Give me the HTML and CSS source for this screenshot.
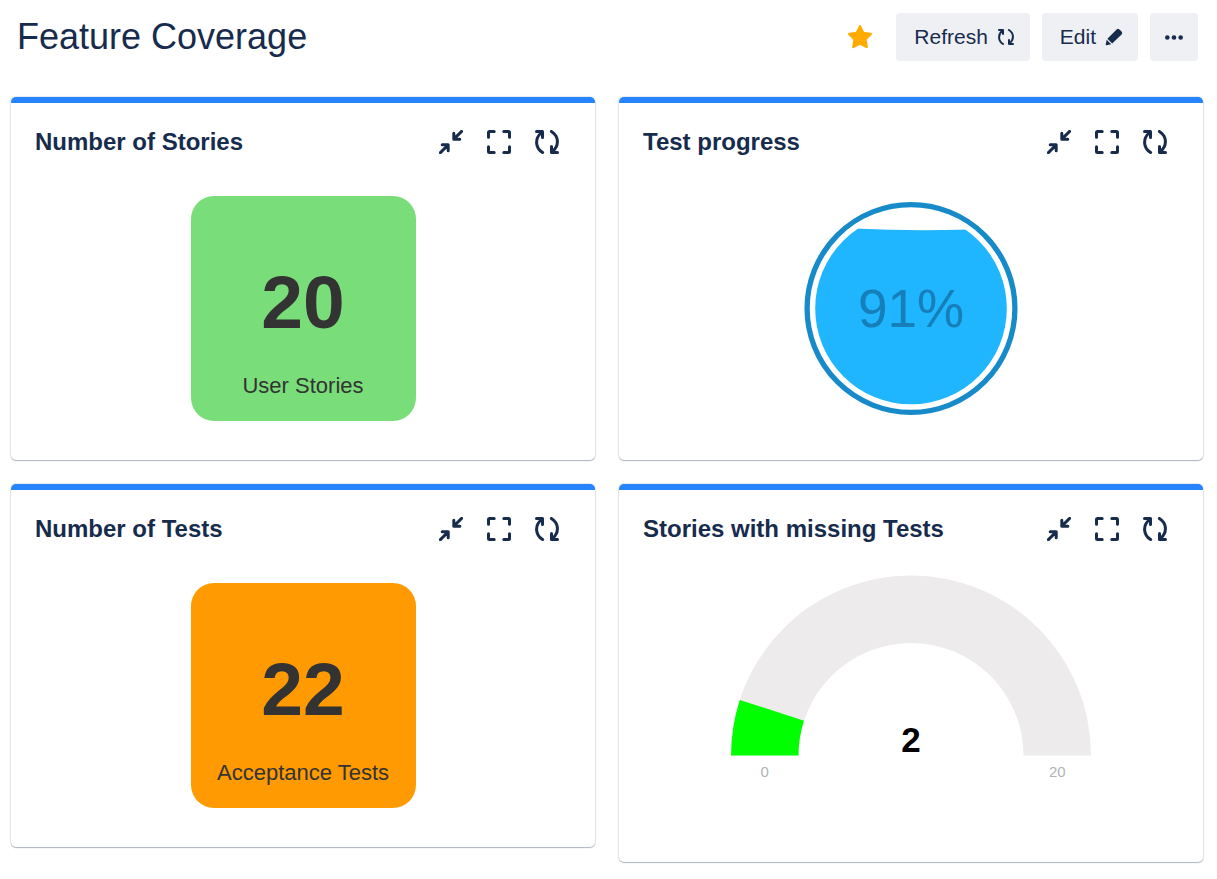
FILE: index.html
```html
<!DOCTYPE html>
<html lang="en">
<head>
<meta charset="utf-8">
<title>Feature Coverage</title>
<link rel="stylesheet" href="styles.css">
</head>
<body>
<svg class="sprite" aria-hidden="true">
  <symbol id="i-collapse" viewBox="0 0 24 24">
    <path d="M22.6 1.4 15.2 8.8M14.8 3.2v6h6M1.4 22.6l7.4-7.4M3.2 14.8h6v6" fill="none" stroke="currentColor" stroke-width="3" stroke-linecap="round" stroke-linejoin="round"/>
  </symbol>
  <symbol id="i-full" viewBox="0 0 24 24">
    <path d="M1.5 7.2V2.5a1 1 0 0 1 1-1h4.7M16.8 1.5h4.7a1 1 0 0 1 1 1v4.7M22.5 16.8v4.7a1 1 0 0 1-1 1h-4.7M7.2 22.5H2.5a1 1 0 0 1-1-1v-4.7" fill="none" stroke="currentColor" stroke-width="3" stroke-linecap="round"/>
  </symbol>
  <symbol id="i-refresh" viewBox="0 0 24 24">
    <path d="M1.5 1.5h6v6M6 3C-.2 8.500 0 17.800 7.600 22.500M22.500 22.500h-6v-6M18 21C24.200 15.500 24 6.200 16.400 1.500" fill="none" stroke="currentColor" stroke-width="3" stroke-linecap="round" stroke-linejoin="round"/>
    <path d="M3 2h5v5ZM21 22h-5v-5Z" fill="currentColor"/>
  </symbol>
</svg>

<header class="page-header">
  <h1 class="page-title">Feature Coverage</h1>
  <div class="actions">
    <button class="star" type="button" aria-label="Favourite">
      <svg width="26" height="26" viewBox="0 0 26 26"><path d="M13 2.200 16.200 8.900 23.800 10 18.400 15.400 19.700 22.900 13 19.500 6.300 22.900 7.600 15.400 2.200 10 9.800 8.900Z" fill="#ffab00" stroke="#ffab00" stroke-width="2.400" stroke-linejoin="round"/></svg>
    </button>
    <button class="btn" type="button">Refresh
      <span class="btn-icon"><svg width="16" height="16"><use href="#i-refresh"/></svg></span>
    </button>
    <button class="btn" type="button">Edit
      <span class="btn-icon"><svg width="18" height="18" viewBox="0 0 18 18"><path d="M11.600 1.400a2 2 0 0 1 2.800 0l2.200 2.200a2 2 0 0 1 0 2.800L7.200 15.600 2.400 10.800ZM1.700 11.800l4.500 4.500L1.400 17.300a.6.6 0 0 1-.7-.7Z" fill="currentColor"/></svg></span>
    </button>
    <button class="btn btn-more" type="button" aria-label="More actions">
      <svg width="18" height="6" viewBox="0 0 18 6"><g fill="currentColor"><circle cx="2.300" cy="3.500" r="2.300"/><circle cx="9" cy="3.500" r="2.300"/><circle cx="15.700" cy="3.500" r="2.300"/></g></svg>
    </button>
  </div>
</header>

<main class="board">
  <section class="card">
    <header class="card-header">
      <h2 class="card-title">Number of Stories</h2>
      <div class="tools">
        <button type="button" class="tool" aria-label="Minimize"><svg width="24" height="24"><use href="#i-collapse"/></svg></button>
        <button type="button" class="tool" aria-label="Maximize"><svg width="24" height="24"><use href="#i-full"/></svg></button>
        <button type="button" class="tool" aria-label="Refresh gadget"><svg width="24" height="24"><use href="#i-refresh"/></svg></button>
      </div>
    </header>
    <div class="card-body">
      <div class="tile tile-green">
        <strong class="tile-value">20</strong>
        <span class="tile-label">User Stories</span>
      </div>
    </div>
  </section>

  <section class="card">
    <header class="card-header">
      <h2 class="card-title">Test progress</h2>
      <div class="tools">
        <button type="button" class="tool" aria-label="Minimize"><svg width="24" height="24"><use href="#i-collapse"/></svg></button>
        <button type="button" class="tool" aria-label="Maximize"><svg width="24" height="24"><use href="#i-full"/></svg></button>
        <button type="button" class="tool" aria-label="Refresh gadget"><svg width="24" height="24"><use href="#i-refresh"/></svg></button>
      </div>
    </header>
    <div class="card-body">
      <svg class="chart" width="225" height="225" viewBox="0 0 225 225" role="img" aria-label="91%">
        <circle cx="112" cy="112.500" r="103.900" fill="none" stroke="#178bca" stroke-width="5.300"/>
        <clipPath id="fluid"><path d="M0 32.500H56Q112 35.500 170 33.500H225V225H0Z"/></clipPath>
        <circle cx="112" cy="112.500" r="95.800" fill="#1fb5ff" clip-path="url(#fluid)"/>
        <text class="liquid-text" x="112" y="131" text-anchor="middle">91%</text>
      </svg>
    </div>
  </section>

  <section class="card">
    <header class="card-header">
      <h2 class="card-title">Number of Tests</h2>
      <div class="tools">
        <button type="button" class="tool" aria-label="Minimize"><svg width="24" height="24"><use href="#i-collapse"/></svg></button>
        <button type="button" class="tool" aria-label="Maximize"><svg width="24" height="24"><use href="#i-full"/></svg></button>
        <button type="button" class="tool" aria-label="Refresh gadget"><svg width="24" height="24"><use href="#i-refresh"/></svg></button>
      </div>
    </header>
    <div class="card-body">
      <div class="tile tile-orange">
        <strong class="tile-value">22</strong>
        <span class="tile-label">Acceptance Tests</span>
      </div>
    </div>
  </section>

  <section class="card">
    <header class="card-header">
      <h2 class="card-title">Stories with missing Tests</h2>
      <div class="tools">
        <button type="button" class="tool" aria-label="Minimize"><svg width="24" height="24"><use href="#i-collapse"/></svg></button>
        <button type="button" class="tool" aria-label="Maximize"><svg width="24" height="24"><use href="#i-full"/></svg></button>
        <button type="button" class="tool" aria-label="Refresh gadget"><svg width="24" height="24"><use href="#i-refresh"/></svg></button>
      </div>
    </header>
    <div class="card-body card-body-gauge">
      <svg class="chart" width="360" height="225" viewBox="0 0 360 225" role="img" aria-label="2 of 20">
        <path d="M0 180.500A180 180 0 0 1 360 180.500H292.500A112.500 112.500 0 0 0 67.500 180.500Z" fill="#edebeb"/>
        <path d="M0 180.500A180 180 0 0 1 8.810 124.880L73 145.740A112.500 112.500 0 0 0 67.500 180.500Z" fill="#0f0"/>
        <text class="gauge-value" x="180" y="177" text-anchor="middle">2</text>
        <text class="gauge-label" x="33.750" y="202" text-anchor="middle">0</text>
        <text class="gauge-label" x="326.250" y="202" text-anchor="middle">20</text>
      </svg>
    </div>
  </section>
</main>
</body>
</html>
```
FILE: styles.css
```css
* {
  box-sizing: border-box;
}

body {
  margin: 0;
  padding: 13px 14px 16px 11px;
  background: #fff;
  color: #172b4d;
  font-family: "Liberation Sans", Arial, sans-serif;
}

svg {
  display: block;
}

.sprite {
  display: none;
}

h1,
h2 {
  margin: 0;
}

button {
  border: 0;
  padding: 0;
  background: none;
  color: inherit;
  font: inherit;
  cursor: pointer;
}

.page-header {
  display: flex;
  align-items: center;
  justify-content: space-between;
  padding: 0 5px 0 6px;
  margin-bottom: 36px;
}

.page-title {
  font-size: 36px;
  font-weight: 400;
  line-height: 48px;
}

.actions {
  display: flex;
  align-items: center;
  gap: 12px;
}

.star {
  margin-right: 11px;
}

.btn {
  display: flex;
  align-items: center;
  gap: 6px;
  height: 48px;
  padding: 0 12px 0 18px;
  border-radius: 4px;
  background: #eff0f4;
  font-size: 21px;
}

.btn-icon {
  display: flex;
  align-items: center;
  justify-content: center;
  width: 24px;
  height: 24px;
}

.btn-more {
  justify-content: center;
  width: 48px;
  padding: 0;
}

.board {
  display: grid;
  grid-template-columns: 1fr 1fr;
  align-items: start;
  gap: 24px;
}

.card {
  overflow: hidden;
  border-top: 6px solid #2684ff;
  border-radius: 5px;
  background: #fff;
  box-shadow: 0 1px 1px rgba(9, 30, 66, 0.25), 0 0 1px 1px rgba(9, 30, 66, 0.1);
}

.card-header {
  display: flex;
  align-items: center;
  justify-content: space-between;
  padding: 15px 24px 0;
}

.card-title {
  font-size: 24px;
  font-weight: 700;
  line-height: 30px;
}

.tools {
  display: flex;
}

.tool {
  display: flex;
  align-items: center;
  justify-content: center;
  width: 48px;
  height: 48px;
}

.card-body {
  display: flex;
  justify-content: center;
  padding: 30px 0 39px;
}

.card-body-gauge {
  padding: 22px 0 62px;
}

.chart {
  max-width: 100%;
}

.tile {
  display: flex;
  flex-direction: column;
  align-items: center;
  justify-content: flex-end;
  gap: 33px;
  width: 225px;
  height: 225px;
  padding-bottom: 22px;
  border-radius: 23px;
  color: #333;
}

.tile-green {
  background: #79de79;
}

.tile-orange {
  background: #ff9a02;
}

.tile-value {
  font-size: 75px;
  line-height: 75px;
}

.tile-label {
  font-size: 22px;
  line-height: 26px;
}

.liquid-text {
  fill: #167fb9;
  font-size: 53px;
}

.gauge-value {
  fill: #000;
  font-size: 35px;
  font-weight: 700;
}

.gauge-label {
  fill: #b3b3b3;
  font-size: 15px;
}
```
